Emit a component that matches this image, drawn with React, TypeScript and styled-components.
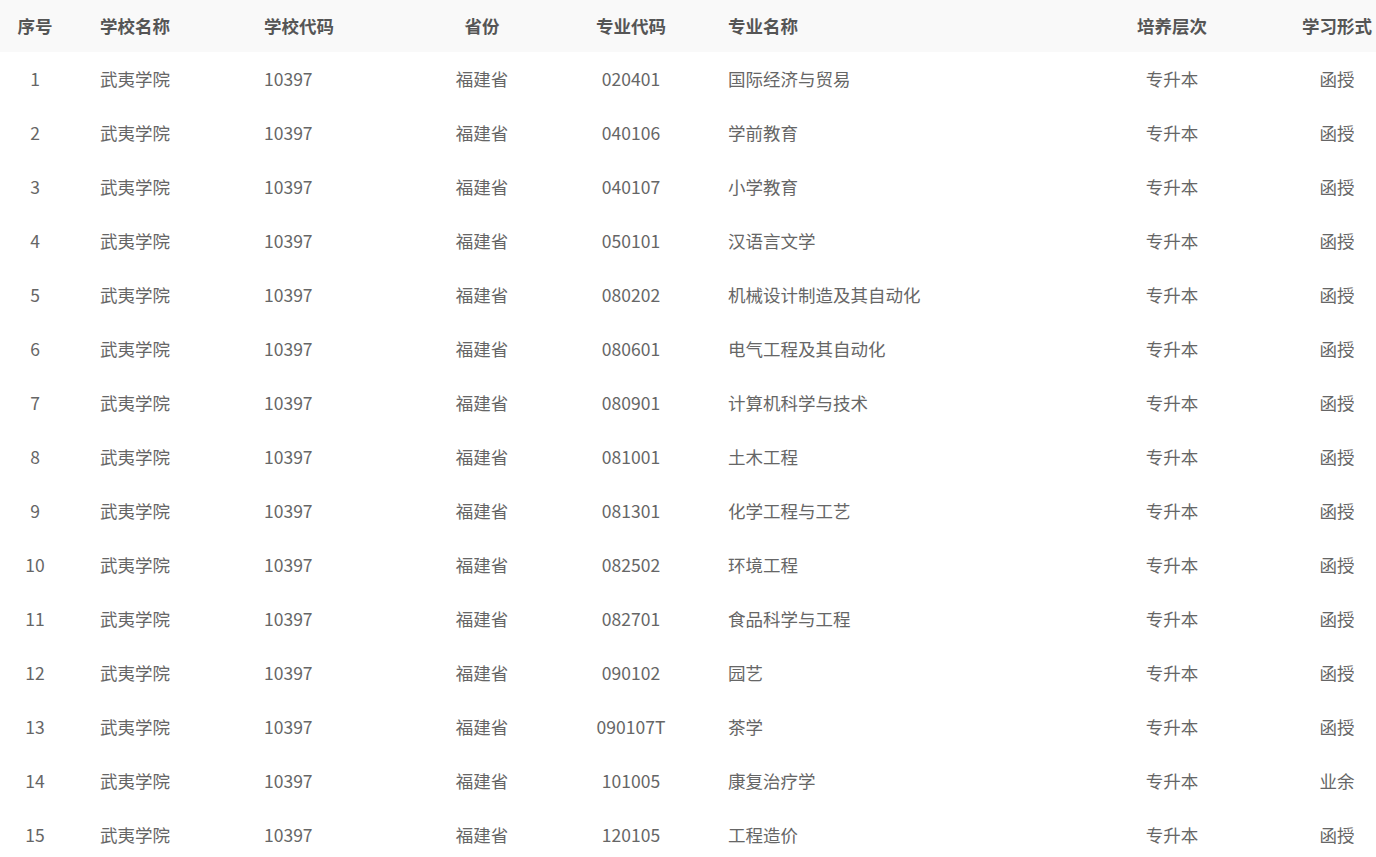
import React from "react";
import styled, { createGlobalStyle } from "styled-components";

const Global = createGlobalStyle`
  html, body { margin: 0; padding: 0; background: #fff; }
  body { font-family: "Noto Sans CJK SC", "Microsoft YaHei", "Noto Sans", sans-serif; overflow: hidden; }
`;

const cols = "70px 164px 166px 164px 134px 348px 252px 78px";

const Table = styled.div`
  width: 1376px;
  display: flex;
  flex-direction: column;
`;

const HeadRow = styled.div`
  display: grid;
  grid-template-columns: ${cols};
  height: 52px;
  align-items: center;
  background: #f9f9f9;
`;

const Row = styled.div`
  display: grid;
  grid-template-columns: ${cols};
  height: 54px;
  align-items: center;
`;

const HeadCell = styled.div<{ $align?: "left" | "center" }>`
  font-size: 17.5px;
  font-weight: 700;
  color: #555;
  text-align: ${(p) => p.$align ?? "center"};
  padding-left: ${(p) => (p.$align === "left" ? "30px" : "0")};
  padding-bottom: 1px;
  white-space: nowrap;
  line-height: 1;
`;

const Cell = styled.div<{ $align?: "left" | "center" }>`
  font-size: 17.5px;
  color: #666;
  text-align: ${(p) => p.$align ?? "center"};
  padding-left: ${(p) => (p.$align === "left" ? "30px" : "0")};
  padding-bottom: 1px;
  white-space: nowrap;
  line-height: 1;
`;

const headers: [string, "left" | "center"][] = [
  ["序号", "center"],
  ["学校名称", "left"],
  ["学校代码", "left"],
  ["省份", "center"],
  ["专业代码", "center"],
  ["专业名称", "left"],
  ["培养层次", "center"],
  ["学习形式", "center"],
];

const majors: [string, string, string][] = [
  ["020401", "国际经济与贸易", "函授"],
  ["040106", "学前教育", "函授"],
  ["040107", "小学教育", "函授"],
  ["050101", "汉语言文学", "函授"],
  ["080202", "机械设计制造及其自动化", "函授"],
  ["080601", "电气工程及其自动化", "函授"],
  ["080901", "计算机科学与技术", "函授"],
  ["081001", "土木工程", "函授"],
  ["081301", "化学工程与工艺", "函授"],
  ["082502", "环境工程", "函授"],
  ["082701", "食品科学与工程", "函授"],
  ["090102", "园艺", "函授"],
  ["090107T", "茶学", "函授"],
  ["101005", "康复治疗学", "业余"],
  ["120105", "工程造价", "函授"],
];

export default function App() {
  return (
    <>
      <Global />
      <Table>
        <HeadRow>
          {headers.map(([h, a]) => (
            <HeadCell key={h} $align={a}>
              {h}
            </HeadCell>
          ))}
        </HeadRow>
        {majors.map(([code, name, form], i) => (
          <Row key={code}>
            <Cell>{i + 1}</Cell>
            <Cell $align="left">武夷学院</Cell>
            <Cell $align="left">10397</Cell>
            <Cell>福建省</Cell>
            <Cell>{code}</Cell>
            <Cell $align="left">{name}</Cell>
            <Cell>专升本</Cell>
            <Cell>{form}</Cell>
          </Row>
        ))}
      </Table>
    </>
  );
}
